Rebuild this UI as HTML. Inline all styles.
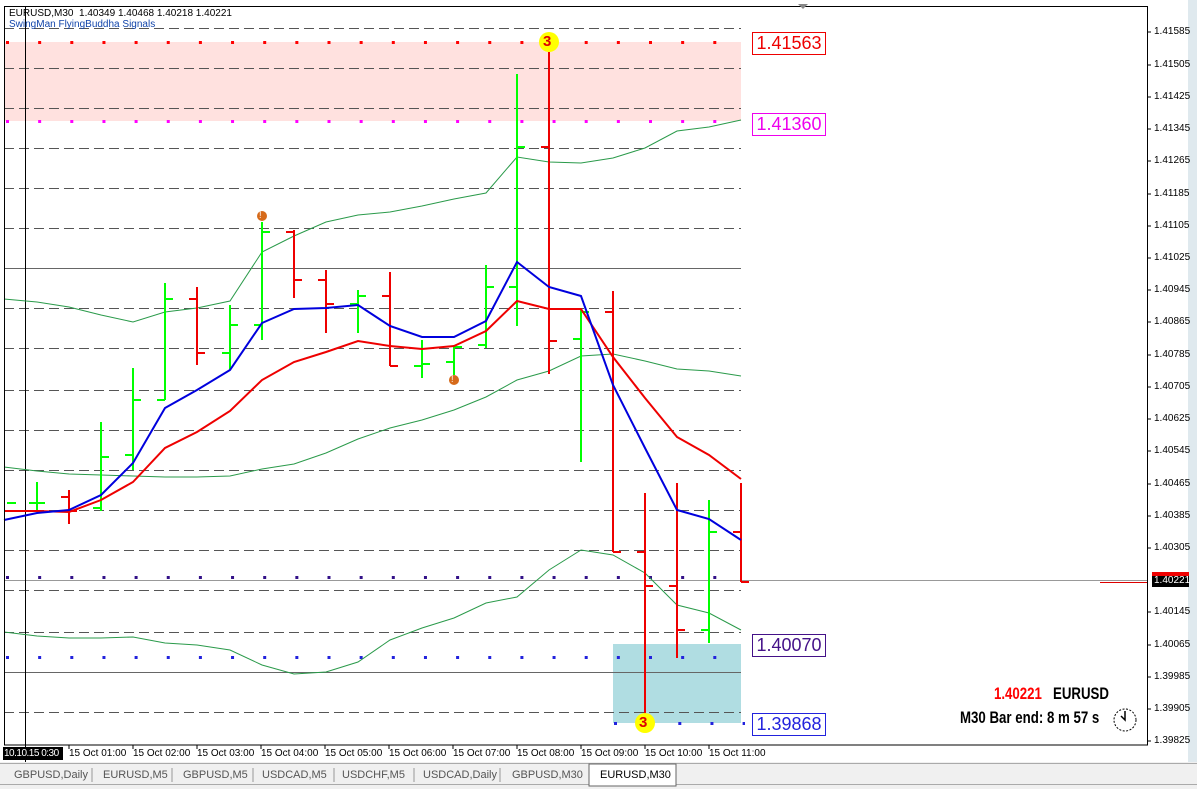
<!DOCTYPE html>
<html><head><meta charset="utf-8"><style>
body{margin:0;width:1197px;height:789px;overflow:hidden;background:#fff;font-family:"Liberation Sans",sans-serif;position:relative}
.ax{position:absolute;left:1154px;font-size:10px;color:#000;line-height:12px}
.tl{position:absolute;top:748px;font-size:10px;line-height:12px;white-space:nowrap}
.tab{position:absolute;top:767px;font-size:11px;color:#555;line-height:16px}
.lb{position:absolute;left:752px;width:72px;height:21px;border:1px solid;font-size:18px;line-height:21px;text-align:center;background:#fff}
.nb{position:absolute;font-size:17px;font-weight:bold;transform:scaleX(0.78);transform-origin:0 0;white-space:nowrap}
</style></head><body>
<svg width="1197" height="789" style="position:absolute;left:0;top:0">
<rect x="0" y="0" width="1197" height="789" fill="#fff"/>
<rect x="1188" y="0" width="9" height="789" fill="#dfe9ee"/>
<rect x="0" y="762" width="1197" height="27" fill="#f0f0f0"/>
<rect x="4" y="42" width="737" height="79" fill="#ffe1df"/>
<rect x="613" y="644" width="128" height="79" fill="#b0dde2"/>
<g stroke="#555" stroke-dasharray="10 5" stroke-width="1">
<path d="M4 28.5H741M4 68.5H741M4 108.5H741M4 148.5H741M4 188.5H741M4 228.5H741M4 308.5H741M4 348.5H741M4 390.5H741M4 430.5H741M4 470.5H741M4 510.5H741M4 550.5H741M4 590.5H741M4 632.5H741M4 712.5H741"/>
</g>
<path d="M4 268.5H741M4 672.5H741" stroke="#666"/>
<path d="M4 580.5H1147" stroke="#999"/>
<path d="M1100 582.5H1147" stroke="#d00"/>
<path d="M25.5 6V762" stroke="#000"/>
<g stroke-width="3" stroke-dasharray="3 29.15">
<path d="M6 42.5H745" stroke="#f00"/>
<path d="M6 121.5H745" stroke="#f0f"/>
<path d="M6 577.5H745" stroke="#318"/>
<path d="M6 657.5H745" stroke="#22d"/>
<path d="M614 723.5H745" stroke="#22d"/>
</g>
<g fill="none" stroke="#2a9a4a" stroke-width="1">
<polyline points="4,299 37,302 69,307 101,315 133,322 165,312 197,308 230,301 262,252 294,236 326,222 358,215 390,212 422,206 454,199 486,193 517,157 549,162 581,163 613,158 645,148 677,131 709,127 741,120"/>
<polyline points="4,632 37,636 69,638 101,638 133,637 165,643 197,645 230,650 262,665 294,674 326,672 358,662 390,640 422,628 454,618 486,603 517,597 549,570 581,550 613,555 645,573 677,605 709,613 741,630"/>
<polyline points="4,467 37,471 69,474 101,475 133,476 165,477 197,477 230,476 262,469 294,464 326,453 358,439 390,428 422,420 454,410 486,397 517,380 549,371 581,356 613,354 645,361 677,369 709,371 741,376"/>
</g>
<g stroke-width="2">
<path stroke="#0f0" d="M7 503H16M37 482V510M29 503H37M37 503H45M101 422V511M93 508H101M101 457H109M133 368V470M125 455H133M133 400H141M165 283V400M157 400H165M165 299H173M230 305V370M222 353H230M230 325H238M262 222V340M254 325H262M262 232H270M358 290V333M350 304H358M358 296H366M422 340V378M414 366H422M422 364H430M454 345V375M446 362H454M454 347H462M486 265V348M478 345H486M486 287H494M517 74V326M509 287H517M517 147H525M581 310V462M573 339H581M581 312H589M709 500V643M701 630H709M709 532H717"/>
<path stroke="#e00" d="M69 490V524M61 497H69M69 511H77M197 287V365M189 299H197M197 353H205M294 230V298M286 232H294M294 280H302M326 270V333M318 280H326M326 304H334M390 272V366M382 296H390M390 366H398M549 52V374M541 147H549M549 341H557M613 291V552M605 312H613M613 552H621M645 493V720M637 552H645M645 586H653M677 483V658M669 586H677M677 630H685M741 483V582M733 532H741M741 582H749"/>
</g>
<polyline fill="none" stroke="#e00" stroke-width="2" points="4,511 37,511 69,512 101,500 133,482 165,448 197,432 230,411 262,380 294,362 326,352 358,341 390,346 422,349 454,346 486,331 517,301 549,309 581,309 613,357 645,398 677,437 709,455 741,479"/>
<polyline fill="none" stroke="#00d" stroke-width="2" points="4,520 37,513 69,510 101,495 133,463 165,408 197,390 230,370 262,323 294,309 326,308 358,305 390,326 422,337 454,337 486,321 517,262 549,287 581,296 613,385 645,448 677,510 709,519 741,540"/>
<circle cx="549" cy="42" r="10" fill="#ff0"/>
<circle cx="645" cy="723" r="10" fill="#ff0"/>
<circle cx="262" cy="216" r="5" fill="#d66a1a"/>
<circle cx="454" cy="380" r="5" fill="#d66a1a"/>
<path d="M4 6.5H1147.5V745.5M4.5 6V745H1147" fill="none" stroke="#000"/>
<path d="M1147 32h4M1147 65h4M1147 97h4M1147 129h4M1147 161h4M1147 194h4M1147 226h4M1147 258h4M1147 290h4M1147 322h4M1147 355h4M1147 387h4M1147 419h4M1147 451h4M1147 484h4M1147 516h4M1147 548h4M1147 612h4M1147 645h4M1147 677h4M1147 709h4M1147 741h4" stroke="#000"/>
<path d="M69 745v4M133 745v4M197 745v4M261 745v4M325 745v4M389 745v4M453 745v4M517 745v4M581 745v4M645 745v4M709 745v4" stroke="#000"/>
<path d="M798 4h10l-5 5z" fill="#888"/>
<path d="M0 763.5H1197M0 784.5H1197" stroke="#aaa"/>
<rect x="589" y="764" width="87" height="22" fill="#fff" stroke="#666"/>
<path d="M92 768v14M172 768v14M253 768v14M334 768v14M414 768v14M500 768v14" stroke="#999"/>
<circle cx="1125" cy="720" r="11" fill="#fff" stroke="#000" stroke-dasharray="2 1.5"/>
<path d="M1125 711v9l-4-4" fill="none" stroke="#000" stroke-width="1.5"/>
<rect x="1152" y="574" width="37" height="13" fill="#000"/>
<rect x="1152" y="572" width="37" height="4" fill="#e00"/>
<rect x="3" y="747" width="60" height="13" fill="#000"/>
</svg>
<div style="position:absolute;left:9px;top:8px;font-size:10px;line-height:11px">EURUSD,M30 &nbsp;1.40349 1.40468 1.40218 1.40221<br><span style="color:#14a">SwingMan FlyingBuddha Signals</span></div>
<div style="position:absolute;left:543px;top:33px;font-size:15px;font-weight:bold;color:#d00">3</div>
<div style="position:absolute;left:639px;top:714px;font-size:15px;font-weight:bold;color:#d00">3</div>
<div style="position:absolute;left:259px;top:210px;font-size:9px;color:#fff">!</div>
<div style="position:absolute;left:451px;top:374px;font-size:9px;color:#fff">!</div>
<div class="lb" style="top:32px;border-color:#e00;color:#e00">1.41563</div>
<div class="lb" style="top:113px;border-color:#e0e;color:#e0e">1.41360</div>
<div class="lb" style="top:634px;border-color:#418;color:#418">1.40070</div>
<div class="lb" style="top:713px;border-color:#22d;color:#22d">1.39868</div>
<div class="nb" style="left:994px;top:684px"><span style="color:#f00">1.40221</span>&nbsp;&nbsp; EURUSD</div>
<div class="nb" style="left:960px;top:708px">M30 Bar end: 8 m 57 s</div>
<div class="ax" style="top:26px">1.41585</div><div class="ax" style="top:59px">1.41505</div><div class="ax" style="top:91px">1.41425</div><div class="ax" style="top:123px">1.41345</div><div class="ax" style="top:155px">1.41265</div><div class="ax" style="top:188px">1.41185</div><div class="ax" style="top:220px">1.41105</div><div class="ax" style="top:252px">1.41025</div><div class="ax" style="top:284px">1.40945</div><div class="ax" style="top:316px">1.40865</div><div class="ax" style="top:349px">1.40785</div><div class="ax" style="top:381px">1.40705</div><div class="ax" style="top:413px">1.40625</div><div class="ax" style="top:445px">1.40545</div><div class="ax" style="top:478px">1.40465</div><div class="ax" style="top:510px">1.40385</div><div class="ax" style="top:542px">1.40305</div><div class="ax" style="top:575px;color:#fff">1.40221</div><div class="ax" style="top:606px">1.40145</div><div class="ax" style="top:639px">1.40065</div><div class="ax" style="top:671px">1.39985</div><div class="ax" style="top:703px">1.39905</div><div class="ax" style="top:735px">1.39825</div>
<div class="tl" style="left:4px;color:#fff;letter-spacing:-0.5px">10.10.15 0:30</div>
<div class="tl" style="left:69px">15 Oct 01:00</div><div class="tl" style="left:133px">15 Oct 02:00</div><div class="tl" style="left:197px">15 Oct 03:00</div><div class="tl" style="left:261px">15 Oct 04:00</div><div class="tl" style="left:325px">15 Oct 05:00</div><div class="tl" style="left:389px">15 Oct 06:00</div><div class="tl" style="left:453px">15 Oct 07:00</div><div class="tl" style="left:517px">15 Oct 08:00</div><div class="tl" style="left:581px">15 Oct 09:00</div><div class="tl" style="left:645px">15 Oct 10:00</div><div class="tl" style="left:709px">15 Oct 11:00</div>
<div class="tab" style="left:14px">GBPUSD,Daily</div><div class="tab" style="left:103px">EURUSD,M5</div><div class="tab" style="left:183px">GBPUSD,M5</div><div class="tab" style="left:262px">USDCAD,M5</div><div class="tab" style="left:342px">USDCHF,M5</div><div class="tab" style="left:423px">USDCAD,Daily</div><div class="tab" style="left:512px">GBPUSD,M30</div><div class="tab" style="left:600px;color:#000">EURUSD,M30</div>
</body></html>
